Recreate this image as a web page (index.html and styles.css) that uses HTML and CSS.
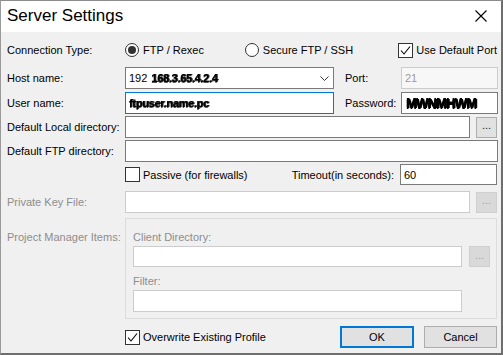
FILE: index.html
```html
<!DOCTYPE html>
<html>
<head>
<meta charset="utf-8">
<link rel="stylesheet" href="styles.css">
</head>
<body>
<div class="window">
  <div class="titlebar">
    <span class="title">Server Settings</span>
    <svg class="close" width="12" height="12" viewBox="0 0 12 12"><path d="M0.5 0.5L11.5 11.5M11.5 0.5L0.5 11.5" stroke="#000" stroke-width="1.1"/></svg>
  </div>
  <div class="content">
    <div class="row r-conn">
      <span class="label">Connection Type:</span>
      <span class="opt opt1"><span class="radio on"></span>FTP / Rexec</span>
      <span class="opt opt2"><span class="radio"></span>Secure FTP / SSH</span>
      <span class="opt"><span class="check on"><svg width="13" height="13" viewBox="0 0 13 13"><path d="M2 6.5L5 10L11 2.5" fill="none" stroke="#000" stroke-width="1.1"/></svg></span>Use Default Port</span>
    </div>
    <div class="row r-host">
      <span class="label">Host name:</span>
      <div class="field combo">192<span class="blur host">168.3.65.4.2.4</span>
        <svg class="chev" width="9" height="5" viewBox="0 0 9 5"><path d="M0.5 0.5L4.5 4.5L8.5 0.5" fill="none" stroke="#333" stroke-width="1"/></svg>
      </div>
      <span class="side-label">Port:</span>
      <div class="field small disabled">21</div>
    </div>
    <div class="row r-user">
      <span class="label">User name:</span>
      <div class="field combo focus"><span class="blur user">ftpuser.name.pc</span></div>
      <span class="side-label">Password:</span>
      <div class="field small"><span class="blur pw">MWNMHWM</span></div>
    </div>
    <div class="row r-local">
      <span class="label">Default Local directory:</span>
      <div class="field wide"></div>
      <button class="dots">...</button>
    </div>
    <div class="row r-ftp">
      <span class="label">Default FTP directory:</span>
      <div class="field full"></div>
    </div>
    <div class="row r-passive">
      <span class="label"></span>
      <span class="opt"><span class="check"></span>Passive (for firewalls)</span>
      <span class="spacer"></span>
      <span class="timeout-label">Timeout(in seconds):</span>
      <div class="field small tall">60</div>
    </div>
    <div class="row r-key">
      <span class="label dim">Private Key File:</span>
      <div class="field wide disabled-light"></div>
      <button class="dots disabled">...</button>
    </div>
    <div class="row r-group">
      <span class="label dim pm">Project Manager Items:</span>
      <div class="group">
        <div class="glabel dim">Client Directory:</div>
        <div class="grow-line">
          <div class="field gfield disabled-light"></div>
          <button class="dots disabled">...</button>
        </div>
        <div class="glabel dim filter">Filter:</div>
        <div class="field gfield tallish disabled-light"></div>
      </div>
    </div>
    <div class="row r-bottom">
      <span class="label"></span>
      <span class="opt"><span class="check on"><svg width="13" height="13" viewBox="0 0 13 13"><path d="M2 6.5L5 10L11 2.5" fill="none" stroke="#000" stroke-width="1.1"/></svg></span>Overwrite Existing Profile</span>
      <span class="spacer"></span>
      <button class="btn ok">OK</button>
      <button class="btn cancel">Cancel</button>
    </div>
  </div>
</div>
</body>
</html>
```
FILE: styles.css
```css
html, body {
  margin: 0;
  padding: 0;
  background: #f0f0f0;
}
.window {
  width: 503px;
  height: 355px;
  box-sizing: border-box;
  border-top: 1px solid #8c8c8c;
  border-left: 1px solid #9a9a9a;
  border-right: 2px solid #6e6e6e;
  border-bottom: 2px solid #6e6e6e;
  background: #f0f0f0;
  font-family: "Liberation Sans", Arial, sans-serif;
  font-size: 11px;
  color: #000;
  overflow: hidden;
}
.titlebar {
  height: 31px;
  background: #fff;
  display: flex;
  align-items: center;
  padding-left: 6px;
  position: relative;
}
.title {
  font-size: 17px;
  margin-top: -1px;
}
.close {
  position: absolute;
  left: 474px;
  top: 9px;
}
.content {
  padding-left: 6px;
  padding-right: 4px;
}
.row {
  display: flex;
  align-items: center;
}
.label {
  width: 118px;
  flex: none;
  white-space: nowrap;
}
.dim { color: #8d8d8d; }
.r-conn { margin-top: 10px; height: 16px; }
.r-host { margin-top: 9px; height: 22px; }
.r-user { margin-top: 3px; height: 22px; }
.r-local { margin-top: 2px; height: 22px; }
.r-ftp { margin-top: 2px; height: 22px; }
.r-passive { margin-top: 2px; height: 21px; }
.r-key { margin-top: 6px; height: 22px; }
.r-group { margin-top: 5px; height: 101px; align-items: flex-start; }
.r-bottom { margin-top: 7px; height: 22px; }

.opt { display: flex; align-items: center; white-space: nowrap; }
.opt1 { width: 121px; }
.opt2 { width: 155px; }
.radio {
  width: 14px;
  height: 14px;
  box-sizing: border-box;
  border: 1px solid #333;
  border-radius: 50%;
  margin-right: 4px;
  display: flex;
  align-items: center;
  justify-content: center;
  background: #fff;
}
.radio.on::after {
  content: "";
  width: 8px;
  height: 8px;
  border-radius: 50%;
  background: #333;
}
.check {
  width: 15px;
  height: 15px;
  box-sizing: border-box;
  border: 1px solid #333;
  background: #fff;
  margin-right: 3px;
  display: flex;
  align-items: center;
  justify-content: center;
}
.check svg { display: block; }

.field {
  box-sizing: border-box;
  height: 22px;
  border: 1px solid #7a7a7a;
  background: #fff;
  padding-left: 3px;
  display: flex;
  align-items: center;
  white-space: nowrap;
  position: relative;
  flex: none;
  overflow: hidden;
}
.combo { width: 209px; }
.combo .chev { position: absolute; right: 4px; top: 8px; }
.focus { border-color: #0078d7; }
.side-label { width: 67px; padding-left: 11px; box-sizing: border-box; flex: none; }
.small { width: 97px; }
.tall { height: 21px; }
.disabled { background: #f7f7f7; border-color: #cccccc; color: #9b9b9b; }
.disabled-light { border-color: #cccccc; background: #fff; }
.wide { width: 345px; }
.full { width: 373px; }
.blur {
  filter: blur(0.7px);
  color: #000;
  font-weight: bold;
  text-shadow: 1px 0 0 #333, 0 1px 0 #555;
  letter-spacing: -0.3px;
}
.host { margin-left: 4px; font-size: 11px; }
.user { font-size: 11px; }
.pw { font-size: 13px; letter-spacing: -0.8px; text-shadow: 1px 0 0 #000, 0 1px 0 #000, 0 -1px 0 #000; margin-left: 1px; }

.dots {
  width: 21px;
  height: 21px;
  margin-left: 6px;
  box-sizing: border-box;
  border: 1px solid #adadad;
  background: #e1e1e1;
  font-family: inherit;
  font-size: 11px;
  color: #222;
  padding: 0 0 4px 0;
  flex: none;
  display: flex;
  align-items: center;
  justify-content: center;
}
.dots.disabled {
  background: #d9d9d9;
  border-color: #cfcfcf;
  color: #a3a3a3;
}
.spacer { flex: 1; }
.timeout-label { margin-right: 6px; }

.pm { padding-top: 11px; line-height: 16px; }
.group {
  width: 373px;
  height: 101px;
  box-sizing: border-box;
  border: 1px solid #dcdcdc;
  padding: 10px 0 0 7px;
}
.glabel { height: 16px; line-height: 16px; }
.grow-line { display: flex; align-items: center; margin-top: 1px; }
.gfield { width: 329px; height: 21px; }
.grow-line .dots { margin-left: 7px; }
.filter { margin-top: 6px; }
.tallish { height: 22px; margin-top: 1px; }

.btn {
  height: 22px;
  box-sizing: border-box;
  background: #e1e1e1;
  border: 1px solid #adadad;
  font-family: inherit;
  font-size: 11px;
  color: #000;
  padding: 0;
  flex: none;
}
.ok { width: 74px; border: 2px solid #0078d7; }
.cancel { width: 73px; margin-left: 10px; }
```
